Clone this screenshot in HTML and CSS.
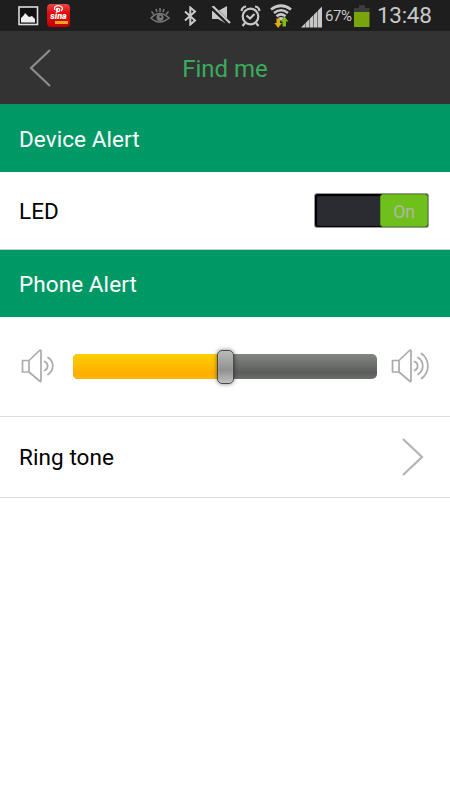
FILE: index.html
```html
<!DOCTYPE html>
<html lang="en">
<head>
    <meta charset="UTF-8">
    <meta name="viewport" content="width=device-width, initial-scale=1.0">
    <title>Find me</title>
    <link rel="stylesheet" href="styles.css">
</head>
<body>
    <div class="status-bar">
        <div class="status-left">
            <svg width="21" height="20" viewBox="0 0 21 20">
                <rect x="1" y="1" width="18.5" height="17.5" fill="#111" stroke="#ddd" stroke-width="1.600"/>
                <path d="M3 16.500V12l3-3 1-2 2 2 2 2 3-1 3 3v3.500z" fill="#eee"/>
            </svg>
            <div class="app-icon">
                <svg width="19" height="10" viewBox="0 0 19 10">
                    <path d="M6 6C4 3 8 1 11 2c3 1 3 3 1 5" fill="none" stroke="#fff" stroke-width="1.200"/>
                    <circle cx="9" cy="6" r="2.300" fill="#fff"/>
                    <circle cx="9.500" cy="6" r=".8" fill="#c00"/>
                </svg>
                <span class="app-name">sina</span>
                <span class="app-tag"></span>
            </div>
        </div>
        <div class="status-right">
            <svg class="eye" width="20" height="16" viewBox="0 0 20 16" fill="none" stroke="#777" stroke-width="1.600">
                <path d="M1 10Q9.500 1 19 10Q9.500 18 1 10z"/>
                <path d="M1.500 3.500l2.500 3M6 1l1 3M10 0V4M14 1l-1 3M18.500 3.500l-2.500 3"/>
                <circle cx="10" cy="9.500" r="3.500" fill="#777" stroke="none"/>
                <circle cx="10.500" cy="8.800" r="1.100" fill="#1e1e1e" stroke="none"/>
            </svg>
            <svg class="bluetooth" width="13" height="20" viewBox="0 0 13 20" fill="none" stroke="#c8c8c8" stroke-width="2">
                <path d="M1 5.500l10 9-4.700 4V1.500L11 5.500l-10 9"/>
            </svg>
            <svg class="mute" width="20" height="19" viewBox="0 0 20 19">
                <path d="M1 5h6l9-5v18l-9-5H1z" fill="#c8c8c8"/>
                <path d="M0 0l19 18.500" stroke="#1e1e1e" stroke-width="4.500"/>
                <path d="M1.500 0l17.500 17" stroke="#c8c8c8" stroke-width="2.200"/>
            </svg>
            <svg class="alarm" width="21" height="22" viewBox="0 0 21 22" fill="none" stroke="#c8c8c8" stroke-width="2.200">
                <circle cx="10.500" cy="11.500" r="7.800"/>
                <path d="M1.500 6Q2 2 6 1.500M19.500 6Q19 2 15 1.500M5 18l-2.500 3M16 18l2.500 3"/>
                <path d="M6.500 10.500l3.500 3 4.500-4.500"/>
            </svg>
            <svg class="wifi" width="22" height="25" viewBox="0 0 22 25" fill="none" stroke="#c8c8c8">
                <path d="M1 5.500Q11-2 21 5.500" stroke-width="2.800"/>
                <path d="M4 9Q11 3.500 18 9" stroke-width="2.600"/>
                <path d="M6.500 12.300Q11 8.500 15.500 12.300" stroke-width="2.500"/>
                <path d="M8 14Q11 12 14 14L11 17z" fill="#c8c8c8" stroke="none"/>
                <path d="M6.500 14.500h3.500v4.500h2l-3.800 5-3.900-5h2.200z" fill="#dcae18" stroke="none"/>
                <path d="M12.500 22.500H16v-5h2.500L14.500 12.500 10.500 17.500h2z" fill="#7ebd13" stroke="none"/>
            </svg>
            <svg class="signal" width="22" height="22" viewBox="0 0 22 22" fill="#c8c8c8">
                <path d="M0 21.500l4-4v4zM4.500 17l4-4v8.500h-4zM9 12.500l3.500-3.500v12.500H9zM13 8.500l3.500-3.500v16.500H13zM17 4.500L21 .5v21h-4z"/>
            </svg>
            <span class="percent">67%</span>
            <svg class="battery" width="16" height="23" viewBox="0 0 16 23">
                <path d="M5 0h6v3h4.500v5H0V3h5z" fill="#3c3c3c"/>
                <rect y="7" width="15.500" height="15" fill="#79a50c"/>
            </svg>
            <span class="clock">13:48</span>
        </div>
    </div>

    <div class="header">
        <svg class="back" width="22" height="40" viewBox="0 0 22 40">
            <path d="M21 2L2 20l19 18" fill="none" stroke="#8c8c8c" stroke-width="2.200"/>
        </svg>
        <h1>Find me</h1>
    </div>

    <h2 class="section-title">Device Alert</h2>
    <div class="row led-row">
        <span class="label">LED</span>
        <div class="switch">
            <div class="switch-thumb">On</div>
        </div>
    </div>

    <h2 class="section-title phone-title">Phone Alert</h2>
    <div class="row volume-row">
        <svg class="speaker-low" width="35" height="34" viewBox="0 0 35 34" fill="none" stroke="#aaa" stroke-width="1.700" stroke-linejoin="round" stroke-linecap="round">
            <path d="M1.500 11.500H8v11.500H1.500zM8 11.500L18.500 1.500Q20 .5 20 2.500v29Q20 33.500 18.500 32L8 23"/>
            <path d="M23.500 12.500a4.800 4.800 0 0 1 0 9M27 8.500a10 10 0 0 1 0 17"/>
        </svg>
        <div class="slider">
            <div class="slider-fill"></div>
            <div class="slider-thumb"></div>
        </div>
        <svg class="speaker-high" width="39" height="34" viewBox="0 0 39 34" fill="none" stroke="#aaa" stroke-width="1.700" stroke-linejoin="round" stroke-linecap="round">
            <path d="M1.500 11.500H8v11.500H1.500zM8 11.500L18.500 1.500Q20 .5 20 2.500v29Q20 33.500 18.500 32L8 23"/>
            <path d="M23.500 12.500a4.800 4.800 0 0 1 0 9M27 8.500a10 10 0 0 1 0 17M30.500 4.500a15.500 15.500 0 0 1 0 25"/>
        </svg>
    </div>
    <div class="row tone-row">
        <span class="label">Ring tone</span>
        <svg width="23" height="40" viewBox="0 0 23 40">
            <path d="M2 2l19 18L2 38" fill="none" stroke="#b4b4b4" stroke-width="2.200"/>
        </svg>
    </div>
</body>
</html>
```
FILE: styles.css
```css
* {
    box-sizing: border-box;
}
body {
    margin: 0;
    background: #fff;
    font-family: Roboto, "Noto Sans", sans-serif;
    color: #000;
}
svg {
    display: block;
    flex: none;
}
.status-bar {
    display: flex;
    justify-content: space-between;
    height: 31px;
    padding: 0 18px;
    background: #1e1e1e;
    color: #c8c8c8;
}
.status-left,
.status-right {
    display: flex;
    align-items: center;
}
.status-left {
    gap: 8px;
}
.app-icon {
    display: flex;
    flex-direction: column;
    align-items: center;
    width: 23px;
    height: 23px;
    border-radius: 4px;
    background: linear-gradient(#e84848, #e00b0b 40%, #c40000);
}
.app-name {
    margin-top: -1px;
    font-size: 9px;
    font-weight: 900;
    font-style: italic;
    line-height: 7px;
    color: #fff;
}
.app-tag {
    width: 13px;
    height: 3px;
    margin: 1px 0 0 6px;
    background: #efa51b;
}
.eye {
    margin-right: 1px;
}
.bluetooth {
    margin-left: 13px;
}
.mute {
    margin-left: 14px;
}
.alarm {
    margin-left: 9px;
}
.wifi {
    margin: 1px 0 0 9px;
}
.signal {
    margin: 2px 0 0 9px;
}
.percent {
    width: 29px;
    margin-left: 2px;
    font-size: 15px;
    letter-spacing: -0.4px;
}
.battery {
    margin-top: 2px;
}
.clock {
    width: 55px;
    margin-left: 7px;
    font-size: 22.5px;
    line-height: 31px;
    letter-spacing: -0.3px;
}
.header {
    display: grid;
    grid-template-columns: 60px 1fr 60px;
    align-items: center;
    height: 73px;
    background: #333;
}
.back {
    margin-left: 29px;
}
h1 {
    margin: 3px 0 0;
    font-size: 24px;
    font-weight: 400;
    text-align: center;
    color: #3aac5d;
}
.section-title {
    height: 68px;
    margin: 0;
    padding: 1px 19px 0;
    font-size: 22.5px;
    font-weight: 400;
    line-height: 68px;
    letter-spacing: 0.08px;
    background: #009966;
    color: #fff;
}
.phone-title {
    height: 67px;
    padding-top: 0;
}
.row {
    display: flex;
    align-items: center;
    justify-content: space-between;
}
.label {
    font-size: 22.5px;
    letter-spacing: 0.08px;
}
.led-row {
    height: 78px;
    padding: 0 21px 0 19px;
    border-bottom: 1px solid #b5d5c9;
}
.switch {
    display: flex;
    justify-content: flex-end;
    width: 115px;
    height: 35px;
    border: 1px solid #999;
    border-radius: 3px;
    background: #2b2c32;
    box-shadow: inset 2px 2px 1px #000, inset 0 -1px 1px #000;
}
.switch-thumb {
    width: 48px;
    height: 33px;
    border: 1px solid #579d18;
    border-radius: 3px;
    background: #6fc01c;
    font-size: 17.5px;
    line-height: 34px;
    text-align: center;
    color: #b2b7a8;
}
.volume-row {
    height: 100px;
    padding: 0 20px 1px 21px;
    border-bottom: 1px solid #ddd;
}
.slider {
    position: relative;
    margin-left: 2px;
    width: 304px;
    height: 25px;
    border-radius: 5px;
    background: linear-gradient(#838682, #5a5d59 75%, #6c6f6b);
}
.slider-fill {
    width: 50%;
    height: 100%;
    border-radius: 5px 0 0 5px;
    background: linear-gradient(#ffcf00, #ffae00 80%, #ffba00);
}
.slider-thumb {
    position: absolute;
    top: -4px;
    left: 144px;
    width: 17px;
    height: 34px;
    border: 1px solid #484848;
    border-radius: 5px;
    background: linear-gradient(#bababa, #909090 60%, #c0c0c0);
    box-shadow: inset 0 0 1px #d0d0d0, 0 0 4px rgba(0, 0, 0, 0.5);
}
.tone-row {
    height: 81px;
    padding: 0 26px 0 19px;
    border-bottom: 1px solid #ddd;
}
```
